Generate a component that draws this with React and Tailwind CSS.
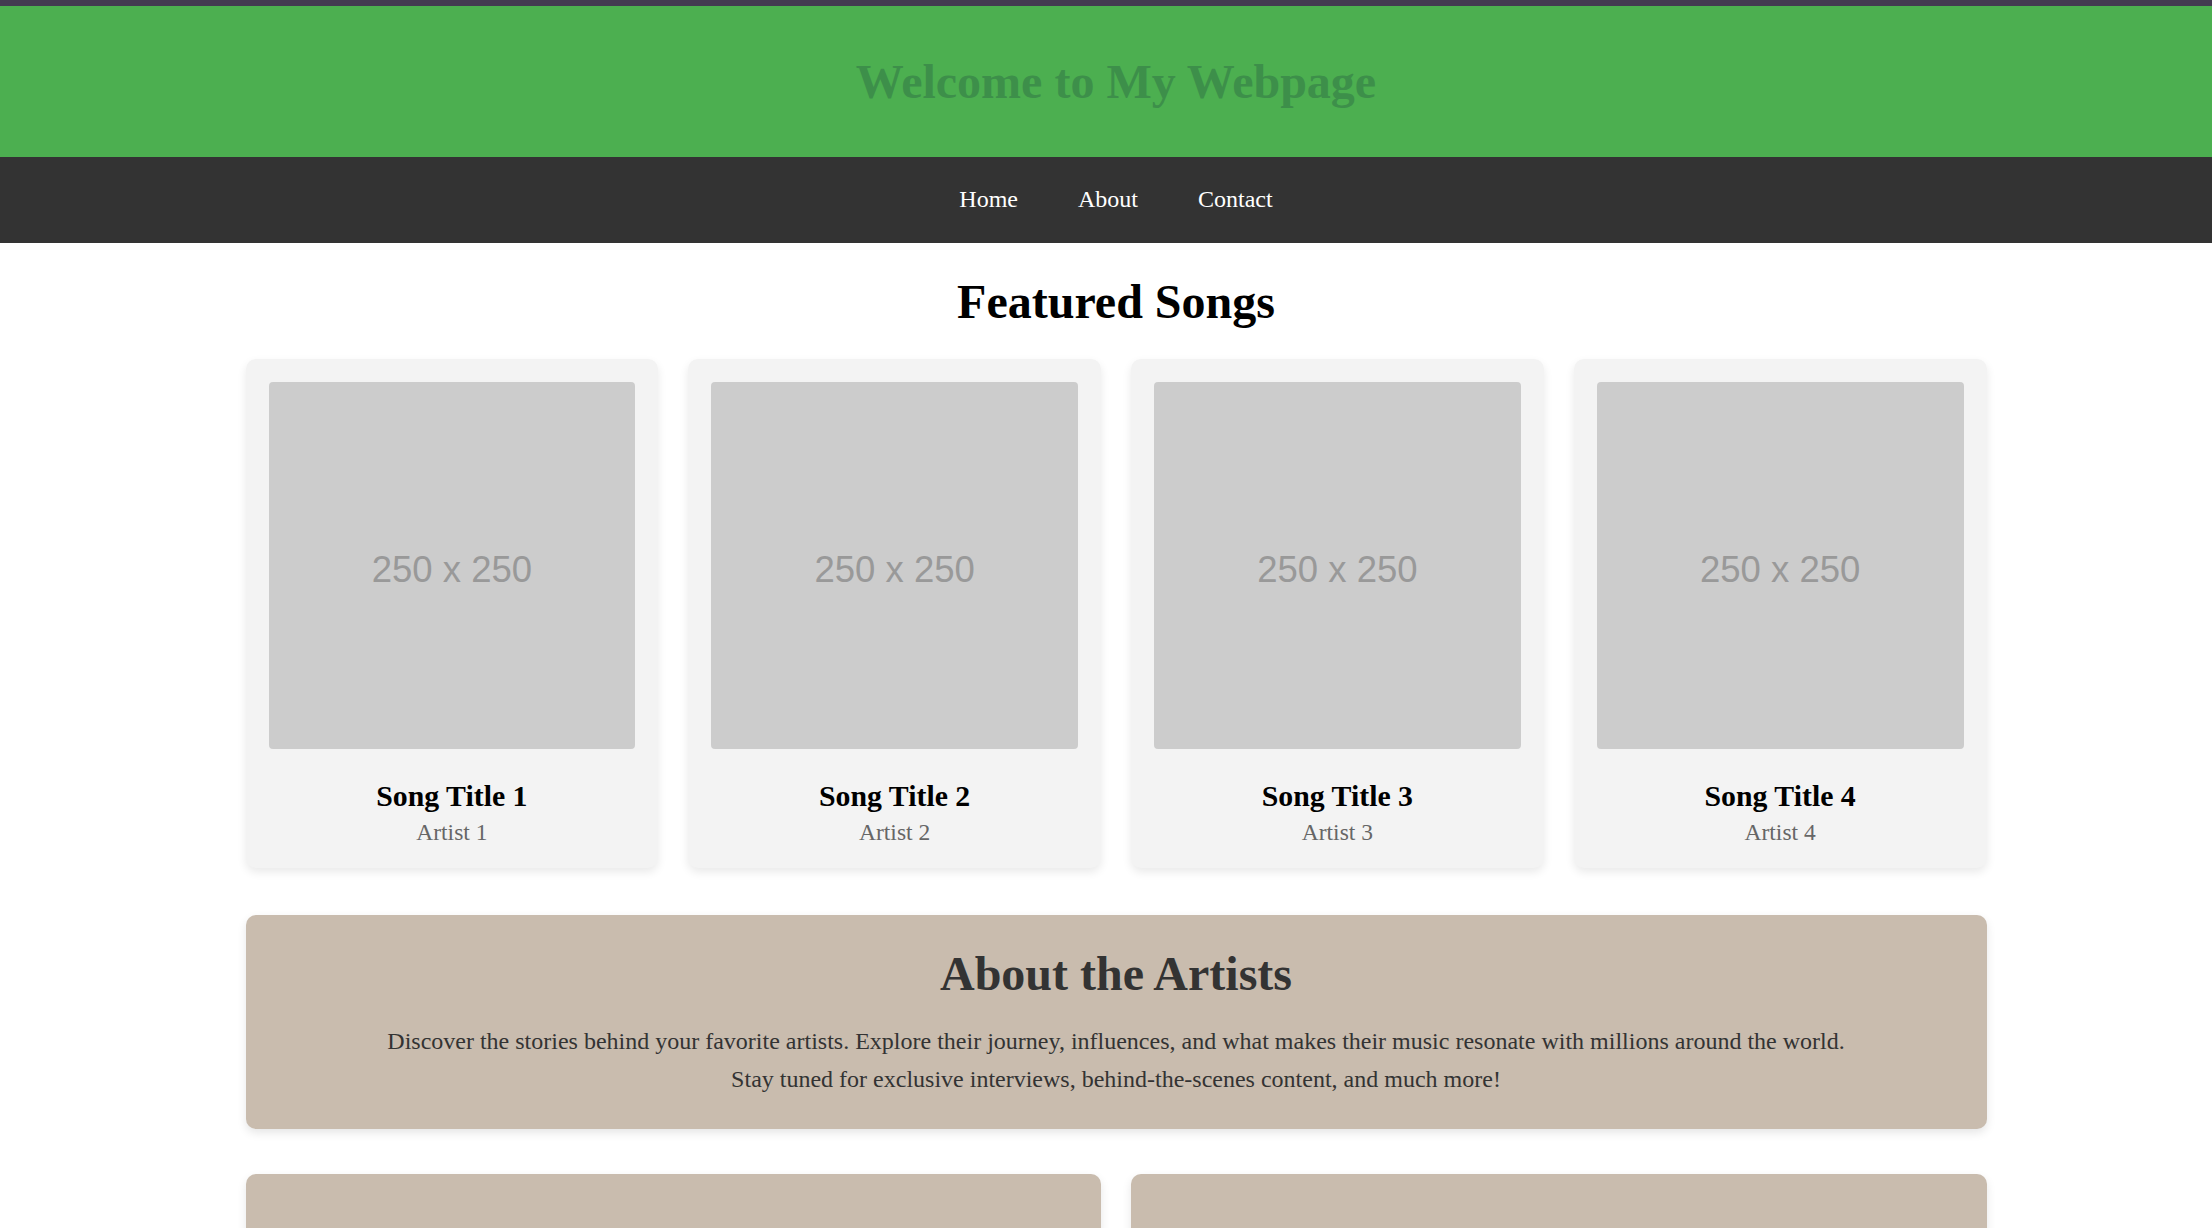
import React from "react";

const songs = [
  { title: "Song Title 1", artist: "Artist 1" },
  { title: "Song Title 2", artist: "Artist 2" },
  { title: "Song Title 3", artist: "Artist 3" },
  { title: "Song Title 4", artist: "Artist 4" },
];

export default function App() {
  return (
    <div className="min-h-screen bg-white font-['Liberation_Serif','Times_New_Roman',serif] text-black">
      <div className="h-[6px] bg-[#433b51]" />
      <header className="bg-[#4caf50] pl-5 pt-[50px] pb-[49px] text-center">
        <h1 className="text-[48px] leading-[52px] font-bold text-[#3d8f4a]">Welcome to My Webpage</h1>
      </header>
      <nav className="bg-[#333333] pl-5 h-[86px] pt-[29px] flex justify-center gap-[60px]">
        <a className="text-[24px] leading-[27px] text-white">Home</a>
        <a className="text-[24px] leading-[27px] text-white">About</a>
        <a className="text-[24px] leading-[27px] text-white">Contact</a>
      </nav>
      <main className="pl-5">
        <div className="mx-auto w-[1741px]">
          <h2 className="pt-[33px] text-center text-[48px] leading-[52px] font-bold">Featured Songs</h2>
          <div className="mt-[31px] grid grid-cols-4 gap-[30px]">
            {songs.map((s) => (
              <div
                key={s.title}
                className="rounded-[10px] bg-[#f3f3f3] p-[23px] text-center shadow-[0_4px_10px_rgba(0,0,0,0.09)]"
              >
                <div className="flex aspect-square w-full items-center justify-center rounded-[4px] bg-[#cccccc]">
                  <span className="mt-[10px] font-['Liberation_Sans',Arial,sans-serif] text-[36.5px] text-[#999999]">250 x 250</span>
                </div>
                <h3 className="mt-[30px] text-[29.8px] leading-[33px] font-bold">{s.title}</h3>
                <p className="mt-[8px] text-[23.5px] leading-[25px] text-[#666666]">{s.artist}</p>
              </div>
            ))}
          </div>
          <section className="mt-[47px] rounded-[10px] bg-[#c9bcae] pt-[33px] pb-[31px] text-center text-[#333333] shadow-[0_4px_10px_rgba(0,0,0,0.1)]">
            <h2 className="text-[48px] leading-[52px] font-bold">About the Artists</h2>
            <p className="mt-[22px] text-[24px] leading-[38px]">
              Discover the stories behind your favorite artists. Explore their journey, influences, and what makes their music resonate with millions around the world.
              <br />
              Stay tuned for exclusive interviews, behind-the-scenes content, and much more!
            </p>
          </section>
          <div className="mt-[45px] grid grid-cols-2 gap-[30px] pb-10">
            <div className="h-[220px] rounded-[10px] bg-[#c9bcae] shadow-[0_4px_10px_rgba(0,0,0,0.1)]" />
            <div className="h-[220px] rounded-[10px] bg-[#c9bcae] shadow-[0_4px_10px_rgba(0,0,0,0.1)]" />
          </div>
        </div>
      </main>
    </div>
  );
}
